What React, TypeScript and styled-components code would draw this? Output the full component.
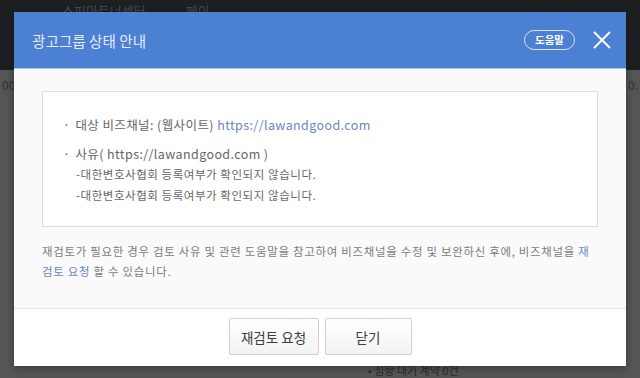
import React from 'react';
import styled, { createGlobalStyle } from 'styled-components';

const GlobalStyle = createGlobalStyle`
  html, body {
    margin: 0;
    padding: 0;
    background: #4f4f4f;
  }
  body {
    font-family: "Noto Sans CJK KR", "Noto Sans", sans-serif;
  }
`;

const Page = styled.div`
  position: relative;
  width: 640px;
  height: 378px;
  overflow: hidden;
  background: #555;
  display: flex;
  flex-direction: column;
`;

const TopBar = styled.div`
  height: 70px;
  background: #1e1f21;
  color: #4b4b4b;
  font-size: 13px;
  padding: 0 0 0 62px;
  display: flex;
  gap: 40px;
  line-height: 22px;
`;

const PageBody = styled.div`
  flex: 1;
  display: flex;
  justify-content: space-between;
  padding: 6px 2px;
  color: #333;
  font-size: 12px;
`;

const PageFooterNote = styled.div`
  position: absolute;
  left: 368px;
  bottom: 0;
  color: #2a2a2a;
  font-size: 11px;
`;

const Modal = styled.div`
  position: absolute;
  left: 14px;
  top: 12px;
  width: 612px;
  height: 354px;
  display: flex;
  flex-direction: column;
  background: #fff;
  box-shadow: 0 2px 8px rgba(0, 0, 0, 0.35);
`;

const Header = styled.div`
  height: 56px;
  background: #4c80d3;
  border-bottom: 1px solid #a9c6f0;
  display: flex;
  align-items: center;
  padding: 0 13px 0 18px;
`;

const Title = styled.h1`
  flex: 1;
  margin: 0;
  font-size: 14.5px;
  font-weight: 400;
  color: #e6edf9;
  letter-spacing: 0.1px;
`;

const HelpPill = styled.span`
  height: 18px;
  padding: 0 10px;
  border: 1.5px solid #d8e5fa;
  border-radius: 10px;
  color: #fff;
  font-size: 10.5px;
  font-weight: 700;
  line-height: 18px;
  margin-right: 16px;
`;

const CloseButton = styled.button`
  width: 22px;
  height: 22px;
  padding: 0;
  border: 0;
  background: none;
  display: flex;
  align-items: center;
  justify-content: center;
`;

const Body = styled.div`
  flex: 1;
  background: #fafafa;
  padding: 22px 28px 0;
`;

const InfoBox = styled.div`
  height: 136px;
  box-sizing: border-box;
  background: #fff;
  border: 1px solid #dedede;
  padding: 22px 20px 0;
  color: #666;
`;

const Bullet = styled.div<{ $gap?: number }>`
  font-size: 12.5px;
  line-height: 21px;
  letter-spacing: 0.4px;
  margin-bottom: ${(p) => p.$gap ?? 0}px;
  &::before {
    content: '·';
    margin-right: 5px;
  }
`;

const SubLine = styled.div`
  font-size: 11.5px;
  line-height: 21px;
  letter-spacing: 0.55px;
  padding-left: 13px;
`;

const Link = styled.span`
  color: #6a86bd;
`;

const Note = styled.p`
  margin: 14px 0 0;
  font-size: 11.4px;
  line-height: 20px;
  letter-spacing: 0.75px;
  color: #7a7a7a;
`;

const Footer = styled.div`
  height: 57px;
  border-top: 1px solid #e3e3e3;
  display: flex;
  justify-content: center;
  align-items: center;
  gap: 6px;
`;

const Button = styled.button<{ $w: number }>`
  width: ${(p) => p.$w}px;
  height: 37px;
  border: 1px solid #d0d0d0;
  border-radius: 2px;
  background: linear-gradient(#ffffff, #f3f3f3);
  color: #3c3c3c;
  font-family: inherit;
  font-size: 13.5px;
  padding: 0;
  margin-top: -2px;
`;

export default function App() {
  return (
    <>
      <GlobalStyle />
      <Page>
        <TopBar>
          <span>스피마트너센터</span>
          <span>페이</span>
        </TopBar>
        <PageBody>
          <span>00.</span>
          <span>0.</span>
        </PageBody>
        <PageFooterNote>• 심항 대기 계약 0건</PageFooterNote>

        <Modal>
          <Header>
            <Title>광고그룹 상태 안내</Title>
            <HelpPill>도움말</HelpPill>
            <CloseButton aria-label="닫기">
              <svg width="18" height="18" viewBox="0 0 18 18">
                <path d="M1 1 L17 17 M17 1 L1 17" stroke="#fff" strokeWidth="2" fill="none" />
              </svg>
            </CloseButton>
          </Header>
          <Body>
            <InfoBox>
              <Bullet $gap={8}>
                대상 비즈채널: (웹사이트) <Link>https://lawandgood.com</Link>
              </Bullet>
              <Bullet>사유( https://lawandgood.com )</Bullet>
              <SubLine>-대한변호사협회 등록여부가 확인되지 않습니다.</SubLine>
              <SubLine>-대한변호사협회 등록여부가 확인되지 않습니다.</SubLine>
            </InfoBox>
            <Note>
              재검토가 필요한 경우 검토 사유 및 관련 도움말을 참고하여 비즈채널을 수정 및 보완하신 후에, 비즈채널을{' '}
              <Link>재검토 요청</Link> 할 수 있습니다.
            </Note>
          </Body>
          <Footer>
            <Button $w={90}>재검토 요청</Button>
            <Button $w={87}>닫기</Button>
          </Footer>
        </Modal>
      </Page>
    </>
  );
}
